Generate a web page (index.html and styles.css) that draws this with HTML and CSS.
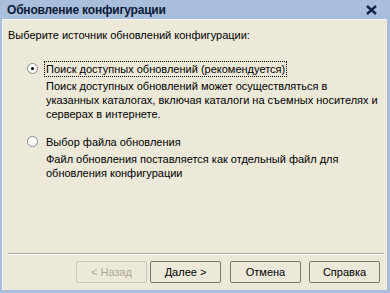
FILE: index.html
```html
<!DOCTYPE html>
<html lang="ru">

<head>
    <meta charset="UTF-8">
    <title>Обновление конфигурации</title>
    <link rel="stylesheet" href="styles.css">
</head>

<body>
    <div class="window">
        <div class="titlebar">
            <span class="title">Обновление конфигурации</span>
            <svg class="close" width="11" height="10" viewBox="0 0 11 10">
                <path d="M1 1 L10 9 M10 1 L1 9" stroke="#10244a" stroke-width="2.4" />
            </svg>
        </div>
        <div class="content">
            <p class="prompt">Выберите источник обновлений конфигурации:</p>

            <div class="option">
                <span class="radio checked"></span>
                <span class="label focused">Поиск доступных обновлений (рекомендуется)</span>
            </div>
            <p class="desc">Поиск доступных обновлений может осуществляться в<br>указанных каталогах, включая каталоги на съемных носителях и<br>серверах в интернете.</p>

            <div class="option second">
                <span class="radio"></span>
                <span class="label">Выбор файла обновления</span>
            </div>
            <p class="desc">Файл обновления поставляется как отдельный файл для<br>обновления конфигурации</p>

            <div class="footer">
                <button class="btn" disabled>&lt; Назад</button>
                <button class="btn">Далее &gt;</button>
                <button class="btn wide-gap">Отмена</button>
                <button class="btn">Справка</button>
            </div>
        </div>
    </div>
</body>

</html>
```

FILE: styles.css
```css
body {
    margin: 0;
    font-family: "Liberation Sans", Arial, sans-serif;
    font-size: 11px;
    color: #000;
}

.window {
    width: 390px;
    height: 293px;
    box-sizing: border-box;
    background-color: #a9bedb;
    padding: 0 3px 3px 2px;
    display: flex;
    flex-direction: column;
}

.titlebar {
    height: 19px;
    display: flex;
    align-items: center;
    justify-content: space-between;
    padding: 0 10px 0 5px;
    flex-shrink: 0;
}

.title {
    font-weight: bold;
    font-size: 12px;
    letter-spacing: -0.2px;
    color: #0a1a36;
}

.close {
    display: block;
    margin-top: 1px;
}

.content {
    flex: 1;
    background-color: #ece9d8;
    border-left: 1px solid #f4f6fa;
    border-top: 1px solid #f4f6fa;
    display: flex;
    flex-direction: column;
    padding: 0 3px 0 5px;
}

.prompt {
    margin: 8px 0 0 0;
    line-height: 14px;
}

.option {
    display: flex;
    align-items: center;
    margin: 18px 0 0 19px;
    height: 17px;
}

.option.second {
    margin-top: 12px;
}

.radio {
    width: 11px;
    height: 11px;
    border: 1px solid #8a8a8a;
    border-radius: 50%;
    background-color: #fff;
    box-sizing: border-box;
    position: relative;
    margin-right: 6px;
}

.radio.checked::after {
    content: "";
    position: absolute;
    left: 3px;
    top: 3px;
    width: 3px;
    height: 3px;
    border-radius: 50%;
    background-color: #000;
}

.label {
    padding: 1px 1px;
    border: 1px solid transparent;
}

.label.focused {
    border: 1px dotted #000;
}

.desc {
    margin: 2px 0 0 38px;
    line-height: 14px;
}

.footer {
    margin-top: auto;
    border-top: 1px solid #aca899;
    box-shadow: inset 0 1px 0 #fff;
    display: flex;
    justify-content: flex-end;
    padding: 7px 4px 7px 0;
    gap: 3px;
}

.btn {
    width: 71px;
    height: 22px;
    font-family: "Liberation Sans", Arial, sans-serif;
    font-size: 11px;
    color: #000;
    background-color: #ece9d8;
    border: 1px solid #7a7a70;
    border-radius: 2px;
    padding: 0;
}

.btn:disabled {
    color: #aca899;
    border-color: #c9c7ba;
}

.btn.wide-gap {
    margin-left: 6px;
    margin-right: 5px;
}
```
